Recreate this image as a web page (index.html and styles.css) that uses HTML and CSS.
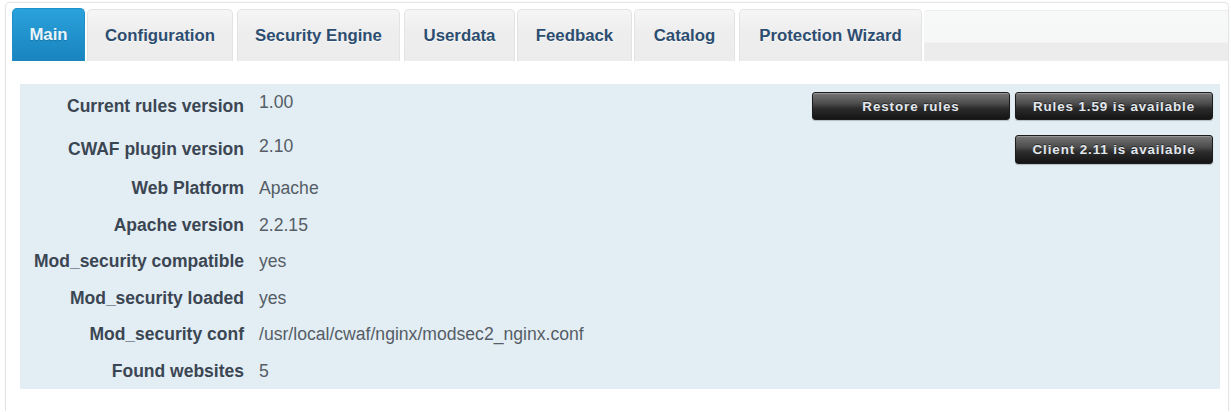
FILE: index.html
```html
<!DOCTYPE html>
<html lang="en">
<head>
<meta charset="utf-8">
<title>CWAF – Main</title>
<link rel="stylesheet" href="styles.css">
</head>
<body>
<div class="frame">
  <nav class="tabs">
    <a class="tab active" href="#">Main</a>
    <a class="tab" href="#">Configuration</a>
    <a class="tab" href="#">Security Engine</a>
    <a class="tab" href="#">Userdata</a>
    <a class="tab" href="#">Feedback</a>
    <a class="tab" href="#">Catalog</a>
    <a class="tab" href="#">Protection Wizard</a>
    <div class="tab-rest"></div>
  </nav>

  <section class="info">
    <div class="row row-first">
      <div class="label">Current rules version</div>
      <div class="value value-top">1.00</div>
      <div class="actions">
        <button class="btn">Restore rules</button>
        <button class="btn">Rules 1.59 is available</button>
      </div>
    </div>
    <div class="row row-second">
      <div class="label">CWAF plugin version</div>
      <div class="value value-top">2.10</div>
      <div class="actions">
        <button class="btn btn-tall">Client 2.11 is available</button>
      </div>
    </div>
    <div class="row">
      <div class="label">Web Platform</div>
      <div class="value">Apache</div>
    </div>
    <div class="row">
      <div class="label">Apache version</div>
      <div class="value">2.2.15</div>
    </div>
    <div class="row">
      <div class="label">Mod_security compatible</div>
      <div class="value">yes</div>
    </div>
    <div class="row">
      <div class="label">Mod_security loaded</div>
      <div class="value">yes</div>
    </div>
    <div class="row">
      <div class="label">Mod_security conf</div>
      <div class="value">/usr/local/cwaf/nginx/modsec2_nginx.conf</div>
    </div>
    <div class="row">
      <div class="label">Found websites</div>
      <div class="value">5</div>
    </div>
  </section>
</div>
</body>
</html>
```

FILE: styles.css
```css
* {
  box-sizing: border-box;
}

body {
  margin: 0;
  background: #ffffff;
  font-family: "Liberation Sans", Arial, sans-serif;
}

/* outer rounded frame around the tabbed panel */
.frame {
  margin: 2px 2px 0 5px;
  height: 409px;
  border: 1px solid #e4e4e4;
  border-bottom: none;
  border-radius: 5px 5px 0 0;
  padding: 5px 0 0 6px;
  box-shadow: 0 0 2px rgba(0, 0, 0, 0.06);
}

/* tab strip */
.tabs {
  display: flex;
  align-items: stretch;
  height: 53px;
}

.tab {
  display: flex;
  align-items: center;
  justify-content: center;
  margin-right: 2px;
  margin-top: 1px;
  padding: 0 10px;
  border: 1px solid #e3e3e3;
  border-bottom: none;
  border-radius: 5px 5px 0 0;
  background: linear-gradient(#f6f6f6, #eeeeee 40%, #ececec);
  color: #2c4d70;
  font-weight: bold;
  font-size: 16.8px;
  text-decoration: none;
  text-shadow: 0 1px 0 rgba(255, 255, 255, 0.7);
}

.tab.active {
  width: 73px;
  margin-top: 0;
  border-color: #1f8fca;
  background: linear-gradient(#2ba2dc, #1d8cc7 70%, #1a84bf);
  color: #e9f5fc;
  text-shadow: 0 1px 1px rgba(0, 0, 0, 0.2);
}

.tab:nth-child(2) { width: 146px; }
.tab:nth-child(3) { width: 163px; margin-left: 2px; }
.tab:nth-child(4) { width: 111px; margin-left: 2px; }
.tab:nth-child(5) { width: 115px; }
.tab:nth-child(6) { width: 101px; }
.tab:nth-child(7) { width: 183px; margin-left: 2px; }

/* empty stretch of the strip right of the last tab */
.tab-rest {
  flex: 1;
  margin-top: 2px;
  border-top: 1px solid #eeeeee;
  border-radius: 3px 0 0 0;
  background: linear-gradient(#f7f8f8 0, #f6f7f7 31px, #ececec 32px, #ececec);
}

/* info panel */
.info {
  margin: 23px 8px 0 8px;
  padding: 0 7px 0 0;
  background: #e3edf4;
}

.row {
  display: grid;
  grid-template-columns: 224px 1fr auto;
  column-gap: 15px;
  align-items: center;
  min-height: 36.5px;
}

.row-first {
  height: 44px;
}

.row-second {
  height: 42px;
}

.label {
  text-align: right;
  font-weight: bold;
  font-size: 17.5px;
  line-height: 20px;
  color: #3b4653;
  white-space: nowrap;
}

.value {
  font-size: 17.6px;
  line-height: 20px;
  color: #555d66;
  white-space: nowrap;
}

.value-top {
  align-self: start;
  padding-top: 8px;
}

.actions {
  display: flex;
  gap: 5px;
  justify-content: flex-end;
}

.btn {
  width: 198px;
  height: 28px;
  padding: 0;
  border: 1px solid #1c1c1c;
  border-radius: 3px;
  background: linear-gradient(#767676, #4d4d4d 40%, #2b2b2b 60%, #141414);
  box-shadow: inset 0 1px 0 rgba(255, 255, 255, 0.25), 0 1px 1px rgba(0, 0, 0, 0.2);
  color: #e2e8ee;
  font-family: "Liberation Sans", Arial, sans-serif;
  font-weight: bold;
  font-size: 13.4px;
  letter-spacing: 0.9px;
  text-shadow: 0 -1px 0 rgba(0, 0, 0, 0.5);
}

.btn-tall {
  height: 29px;
}
```
